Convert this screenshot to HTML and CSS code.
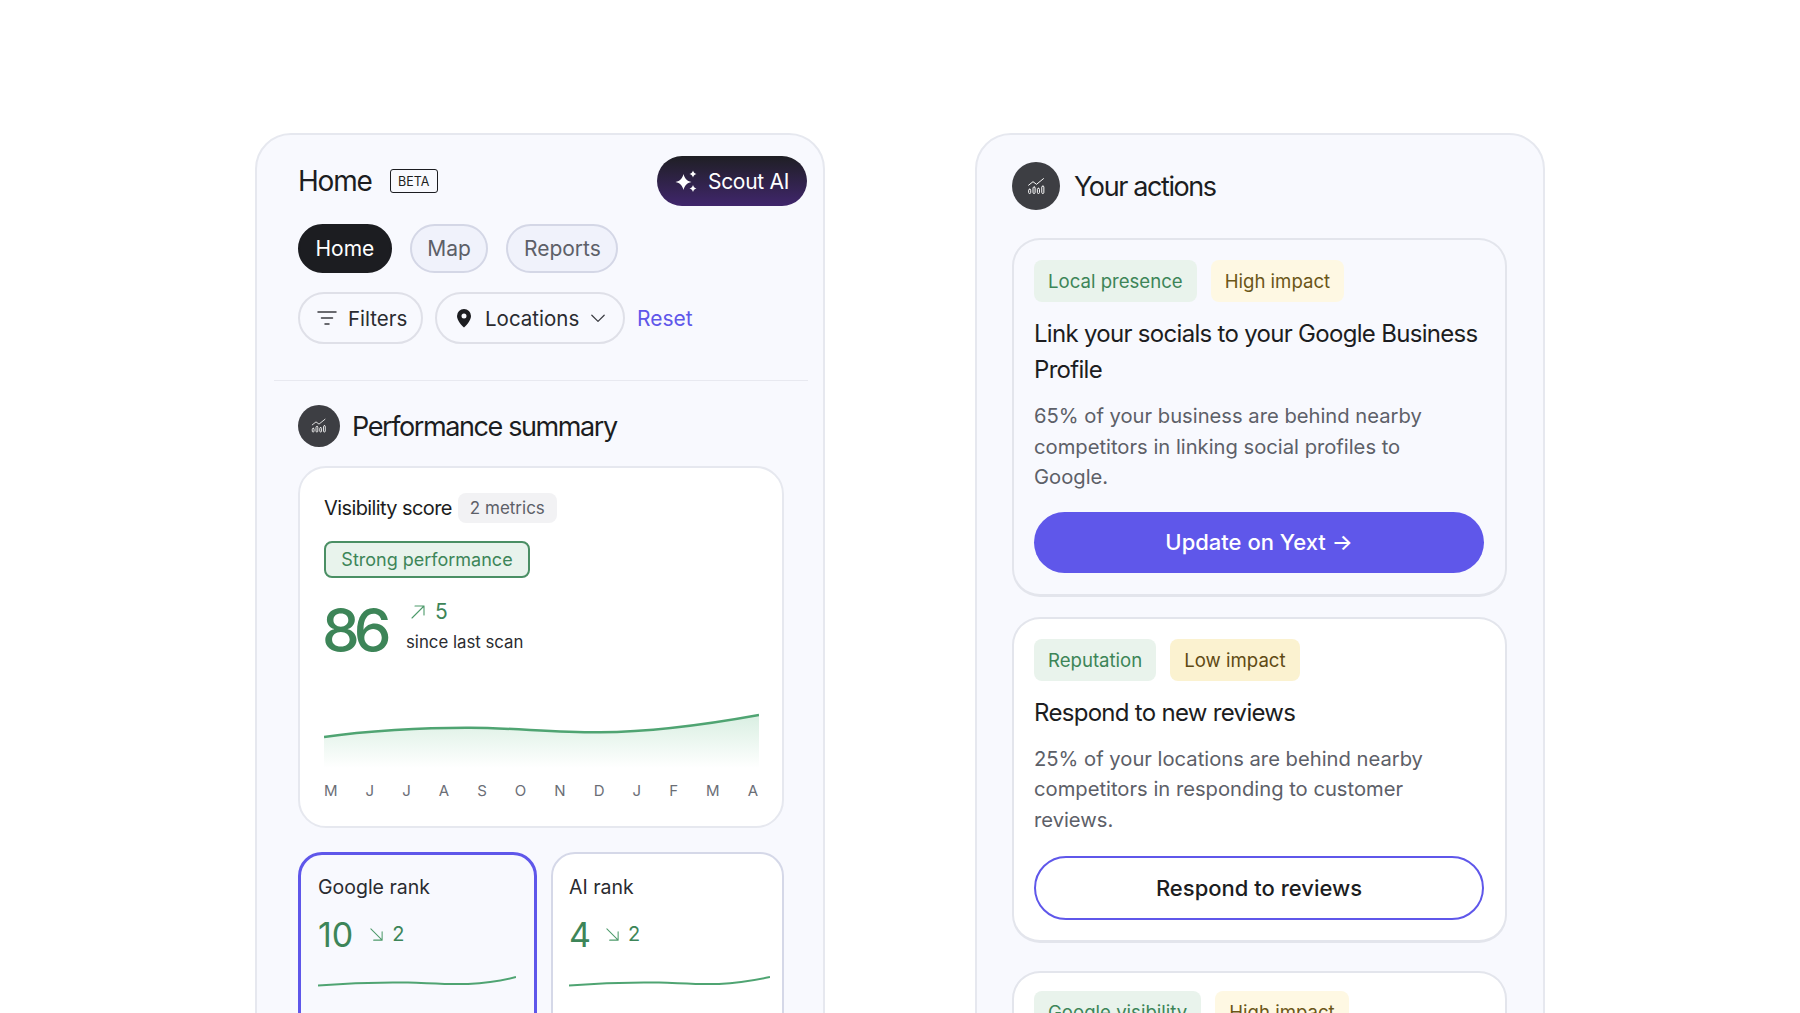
FILE: index.html
```html
<!DOCTYPE html>
<html lang="en">
<head>
<meta charset="utf-8">
<title>Home</title>
<link rel="stylesheet" href="styles.css">
</head>
<body>
<main class="stage">
  <section class="panel panel-left">
    <header class="top">
      <h1 class="home-title">Home</h1>
      <span class="beta">BETA</span>
      <button class="scout">
        <svg class="spark" viewBox="0 0 24 24" width="24" height="24" fill="#fff"><path d="M8.500 5C9.800 9.800 11.700 11.700 16.500 13 11.700 14.300 9.800 16.200 8.500 21 7.200 16.200 5.300 14.300 .5 13 5.300 11.700 7.200 9.800 8.500 5z"/><path d="M18 1.500C18.600 3.600 19.400 4.400 21.500 5 19.400 5.600 18.600 6.400 18 8.500 17.400 6.400 16.600 5.600 14.500 5 16.600 4.400 17.400 3.600 18 1.500z"/><path d="M18 16C18.600 18.100 19.400 18.900 21.500 19.500 19.400 20.100 18.600 20.900 18 23 17.400 20.900 16.600 20.100 14.500 19.500 16.600 18.900 17.400 18.100 18 16z"/></svg>
        Scout AI
      </button>
    </header>
    <nav class="tabs">
      <a class="tab tab-on">Home</a>
      <a class="tab">Map</a>
      <a class="tab">Reports</a>
    </nav>
    <div class="filters">
      <button class="fbtn fbtn-filters">
        <svg viewBox="0 0 24 24" width="24" height="24" fill="none" stroke="#3a3b40" stroke-width="1.500" stroke-linecap="round"><path d="M3 6h18M6.500 12h11M10 18h4"/></svg>
        Filters
      </button>
      <button class="fbtn fbtn-loc">
        <svg viewBox="0 0 24 24" width="24" height="24"><path fill="#1c1d21" fill-rule="evenodd" d="M12 3a7 7 0 0 0-7 7c0 4.800 5.200 9.800 7 11.500 1.800-1.700 7-6.700 7-11.500a7 7 0 0 0-7-7zm0 9.500a2.500 2.500 0 1 1 0-5 2.500 2.500 0 0 1 0 5z"/></svg>
        Locations
        <svg class="chev" viewBox="0 0 16 16" width="18" height="18" fill="none" stroke="#3a3b40" stroke-width="1.100" stroke-linecap="round" stroke-linejoin="round"><path d="M2.500 5.500 8 11l5.500-5.500"/></svg>
      </button>
      <a class="reset">Reset</a>
    </div>
    <hr class="rule">
    <div class="sec-head">
      <span class="round round-sm">
        <svg viewBox="0 0 24 24" width="18" height="18" fill="none" stroke="#fff" stroke-width="1.100" stroke-linecap="round" stroke-linejoin="round"><path d="M3 10.500 8 6.500l4 3 8-6.500"/><rect x="3" y="15" width="2.400" height="5" rx="1.200"/><rect x="8" y="12.500" width="2.400" height="7.500" rx="1.200"/><rect x="13" y="14" width="2.400" height="6" rx="1.200"/><rect x="18" y="11.500" width="2.400" height="8.500" rx="1.200"/></svg>
      </span>
      <h2 class="sec-title">Performance summary</h2>
    </div>
    <article class="vis-card">
      <div class="vis-head">
        <span class="vis-name">Visibility score</span>
        <span class="metrics">2 metrics</span>
      </div>
      <span class="strong">Strong performance</span>
      <div class="score-row">
        <span class="score">86</span>
        <div class="score-side">
          <div class="delta">
            <svg viewBox="0 0 16 16" width="16" height="16" fill="none" stroke="#4d9a6b" stroke-width="1.100" stroke-linecap="round" stroke-linejoin="round"><path d="M2 14 14 2M5 2h9v9"/></svg>
            <span>5</span>
          </div>
          <div class="since">since last scan</div>
        </div>
      </div>
      <svg class="chart" viewBox="0 0 435 55" width="435" height="55">
        <defs>
          <linearGradient id="areafill" x1="0" y1="0" x2="0" y2="1">
            <stop offset="0" stop-color="#d9efe2"/>
            <stop offset="1" stop-color="#ffffff"/>
          </linearGradient>
        </defs>
        <path fill="url(#areafill)" d="M0 24C40 18 100 14.500 146 14.700 190 15 230 19.500 276 19.300 330 19 380 12 435 2V55H0z"/>
        <path fill="none" stroke="#4fa472" stroke-width="2.500" d="M0 24C40 18 100 14.500 146 14.700 190 15 230 19.500 276 19.300 330 19 380 12 435 2"/>
      </svg>
      <div class="months">
        <span>M</span><span>J</span><span>J</span><span>A</span><span>S</span><span>O</span><span>N</span><span>D</span><span>J</span><span>F</span><span>M</span><span>A</span>
      </div>
    </article>
    <div class="rank-row">
      <article class="rank rank-on">
        <div class="rank-name">Google rank</div>
        <div class="rank-line">
          <span class="rank-num">10</span>
          <svg viewBox="0 0 16 16" width="15" height="15" fill="none" stroke="#4d9a6b" stroke-width="1.100" stroke-linecap="round" stroke-linejoin="round"><path d="M2 2 14 14M14 5v9H5"/></svg>
          <span class="rank-d">2</span>
        </div>
        <svg class="spk" viewBox="0 0 198 12" width="198" height="12" fill="none" stroke="#4fa472" stroke-width="2"><path d="M0 10.500C30 8 60 7 90 7.500 110 8 125 9.500 150 9 170 8 185 5.500 198 2"/></svg>
      </article>
      <article class="rank">
        <div class="rank-name">AI rank</div>
        <div class="rank-line">
          <span class="rank-num rank-num-one">4</span>
          <svg viewBox="0 0 16 16" width="15" height="15" fill="none" stroke="#4d9a6b" stroke-width="1.100" stroke-linecap="round" stroke-linejoin="round"><path d="M2 2 14 14M14 5v9H5"/></svg>
          <span class="rank-d">2</span>
        </div>
        <svg class="spk" viewBox="0 0 201 12" width="201" height="12" fill="none" stroke="#4fa472" stroke-width="2"><path d="M0 10.500C30 8 60 7 90 7.500 110 8 125 9.500 150 9 170 8 185 5.500 201 2"/></svg>
      </article>
    </div>
  </section>

  <section class="panel panel-right">
    <div class="sec-head sec-head-r">
      <span class="round round-lg">
        <svg viewBox="0 0 24 24" width="21" height="21" fill="none" stroke="#fff" stroke-width="1.100" stroke-linecap="round" stroke-linejoin="round"><path d="M3 10.500 8 6.500l4 3 8-6.500"/><rect x="3" y="15" width="2.400" height="5" rx="1.200"/><rect x="8" y="12.500" width="2.400" height="7.500" rx="1.200"/><rect x="13" y="14" width="2.400" height="6" rx="1.200"/><rect x="18" y="11.500" width="2.400" height="8.500" rx="1.200"/></svg>
      </span>
      <h2 class="sec-title">Your actions</h2>
    </div>
    <article class="action action-tint">
      <div class="tags"><span class="tag tag-g">Local presence</span><span class="tag tag-y">High impact</span></div>
      <h3 class="a-title">Link your socials to your Google Business Profile</h3>
      <p class="a-body">65% of your business are behind nearby competitors in linking social profiles to Google.</p>
      <button class="cta cta-fill">Update on Yext →</button>
    </article>
    <article class="action action-mid">
      <div class="tags"><span class="tag tag-g">Reputation</span><span class="tag tag-y2">Low impact</span></div>
      <h3 class="a-title">Respond to new reviews</h3>
      <p class="a-body">25% of your locations are behind nearby competitors in responding to customer reviews.</p>
      <button class="cta cta-line">Respond to reviews</button>
    </article>
    <article class="action action-last">
      <div class="tags"><span class="tag tag-g">Google visibility</span><span class="tag tag-y">High impact</span></div>
    </article>
  </section>
</main>
</body>
</html>
```
FILE: styles.css
```css
* { box-sizing: border-box; }
html, body { margin: 0; height: 1013px; overflow: hidden; background: #fff; }
body { font-family: Inter, "Liberation Sans", sans-serif; color: #1c1d21; }
h1, h2, h3, p { margin: 0; font-weight: 400; }
button { font-family: inherit; cursor: pointer; }

.stage { display: flex; gap: 150px; padding: 133px 0 0 255px; align-items: flex-start; }
.panel { width: 570px; height: 1100px; flex: none; background: #f8f9fe; border: 2px solid #e6e8ef; border-radius: 36px; }
.panel-left { padding: 21px 16px 0 41px; }
.panel-right { padding: 27px 32px 0 35px; }

.top { display: flex; align-items: center; height: 50px; }
.home-title { font-size: 28px; letter-spacing: -1.2px; }
.beta { margin-left: 18px; width: 48px; height: 24px; border: 1px solid #1c1d21; border-radius: 3px; font-size: 12.500px; display: flex; align-items: center; justify-content: center; }
.scout { margin-left: auto; width: 150px; height: 50px; border: 0; border-radius: 25px; color: #fff; font-size: 21px; letter-spacing: -0.300px; display: flex; align-items: center; justify-content: center; gap: 9px; background: linear-gradient(180deg, #1f1f24, #40266c); }

.tabs { display: flex; gap: 18px; margin-top: 18px; }
.tab { height: 49px; display: flex; align-items: center; justify-content: center; border-radius: 25px; font-size: 21px; padding: 0 15.500px; background: #f0f2fb; border: 2px solid #d4d7e6; color: #5d6068; }
.tab-on { background: #1c1d21; border-color: #1c1d21; color: #fff; }

.filters { display: flex; align-items: center; gap: 12px; margin-top: 19px; }
.fbtn { height: 52px; display: flex; align-items: center; border-radius: 26px; background: #f8f9fe; border: 2px solid #dfe0e8; color: #2a2b30; font-size: 20.500px; }
.fbtn-filters { width: 125px; padding: 0 0 0 15px; gap: 9px; }
.fbtn-loc { width: 190px; padding: 0 0 0 15px; gap: 9px; }
.chev { margin-left: 1px; }
.reset { color: #5f57ea; font-size: 21px; }

.rule { border: 0; height: 1px; background: #e8e9f0; margin: 36px 0 0 -24px; width: 534px; }

.sec-head { display: flex; align-items: center; gap: 12px; margin-top: 24px; }
.sec-head-r { margin: 0; gap: 14px; }
.round { display: flex; align-items: center; justify-content: center; border-radius: 50%; background: #3d3e43; flex: none; }
.round-sm { width: 42px; height: 42px; }
.round-lg { width: 48px; height: 48px; }
.sec-title { font-size: 27px; letter-spacing: -1.400px; }

.vis-card { width: 486px; height: 362px; margin-top: 19px; background: #fff; border: 2px solid #e6e8ef; border-radius: 28px; padding: 25px 24px 0; }
.vis-head { display: flex; align-items: center; gap: 6px; height: 30px; }
.vis-name { font-size: 20px; letter-spacing: -0.600px; }
.metrics { height: 30px; display: flex; align-items: center; padding: 0 12px; border-radius: 8px; background: #f2f2f4; color: #5d6068; font-size: 17px; }
.strong { display: inline-flex; align-items: center; height: 37px; width: 206px; justify-content: center; margin-top: 18px; border: 2px solid #4a8f64; border-radius: 8px; background: #e8f3ec; color: #3d8558; font-size: 18px; }

.score-row { display: flex; align-items: center; margin-top: 14px; height: 76px; }
.score { font-size: 60px; font-weight: 500; color: #3d8558; letter-spacing: -6px; width: 82px; margin-left: -2px; margin-right: 2px; }
.score-side { margin-bottom: 12px; }
.delta { display: flex; align-items: center; gap: 9px; margin-left: 4px; color: #3d8558; font-size: 21px; line-height: 30px; }
.since { font-size: 16.800px; margin-top: 5px; color: #2a2b30; }

.chart { display: block; margin-top: 45px; }
.months { display: flex; justify-content: space-between; margin-top: 13px; font-size: 15px; color: #6b6e76; }

.rank-row { display: flex; gap: 14px; margin-top: 24px; }
.rank { width: 233px; height: 300px; flex: none; background: #fff; border: 2px solid #d5d8e8; border-radius: 24px; padding: 20px 0 0 16px; }
.rank-on { width: 239px; padding: 19px 0 0 17px; background: #f8f9fe; border: 3px solid #5f57ea; }
.rank-name { font-size: 19.500px; line-height: 26px; color: #2a2b30; }
.rank-line { display: flex; align-items: center; margin-top: 12px; height: 44px; color: #3d8558; }
.rank-num { font-size: 34px; margin-right: 16px; }
.rank-num-one { margin-right: 14px; }
.rank-d { font-size: 20px; margin-left: 8px; }
.spk { display: block; margin-top: 19px; }

.action { width: 495px; margin-top: 20px; background: #fff; border: 2px solid #e3e5ec; border-bottom-width: 3px; border-radius: 28px; padding: 20px 21px 21px 20px; }
.action-tint { background: #f8f9fe; margin-top: 28px; }
.action-mid { padding-bottom: 20px; }
.action-last { margin-top: 28px; height: 200px; padding-top: 18px; }
.tags { display: flex; gap: 14px; }
.tag { height: 42px; display: flex; align-items: center; padding: 0 14px; border-radius: 8px; font-size: 18.600px; }
.tag-g { background: #e9f3ec; color: #3d8558; }
.tag-y { background: #fef8e3; color: #6b5618; }
.tag-y2 { background: #fbf2d0; color: #5f4a14; }
.a-title { font-size: 24px; line-height: 36px; margin-top: 14px; letter-spacing: -0.700px; }
.a-body { font-size: 20.200px; line-height: 30.600px; margin-top: 13px; color: #5d6068; max-width: 425px; }
.cta { display: block; width: 100%; border-radius: 32px; font-size: 22px; font-weight: 500; }
.cta-fill { height: 61px; margin-top: 19px; background: #5f57ea; border: 0; color: #fff; }
.cta-line { height: 64px; margin-top: 20px; background: #fff; border: 2.500px solid #5f57ea; color: #1c1d21; }
```
